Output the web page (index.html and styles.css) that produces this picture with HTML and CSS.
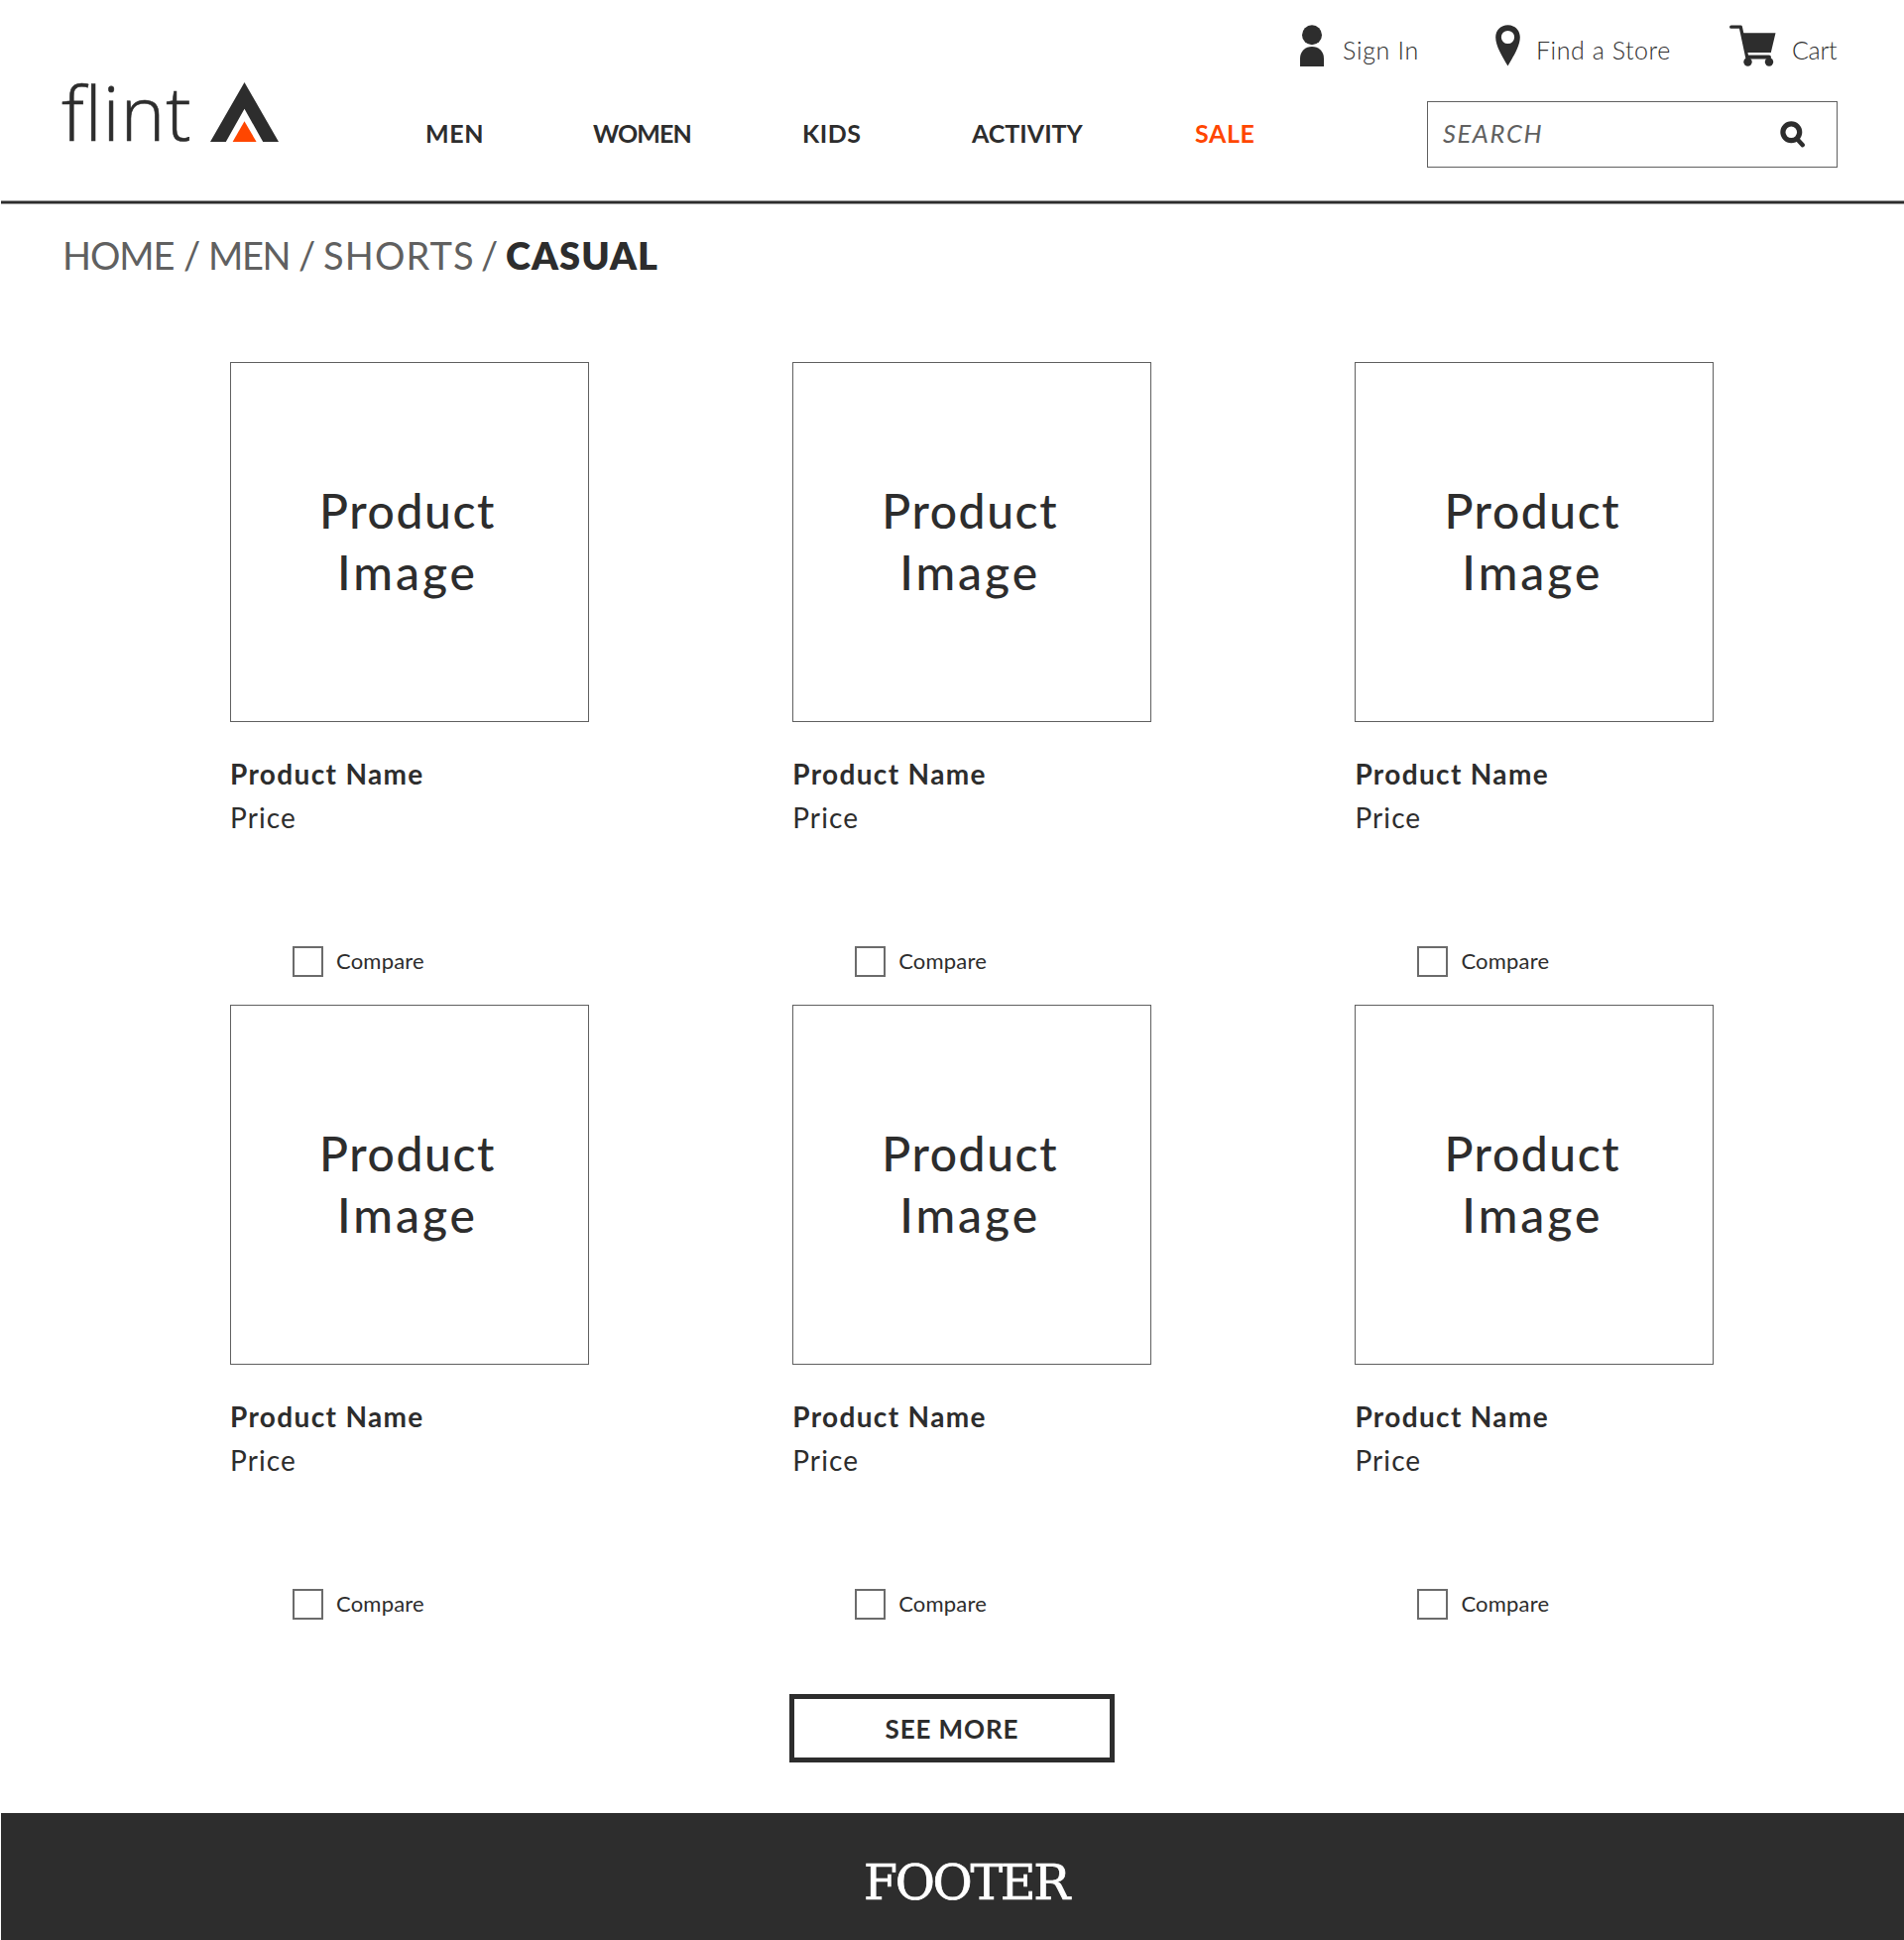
FILE: index.html
```
<!DOCTYPE html>
<html lang="en">
<head>
<meta charset="utf-8">
<title>flint – Casual Shorts</title>
<link rel="stylesheet" href="styles.css">
</head>
<body>
<header class="header">
  <a class="logo">
    <span class="logo-word">flint</span>
    <svg class="logo-mark" viewBox="0 0 69 60" width="69" height="60">
      <path fill="#2d2d2d" d="M34.5 0 69 60H53.2L34.5 26.8 15.8 60H0Z"/>
      <path fill="#ff4600" d="M34.5 39.3 46.6 60H22.6Z"/>
    </svg>
  </a>
  <nav class="nav">
    <a class="wide">MEN</a>
    <a class="tight">WOMEN</a>
    <a class="wide">KIDS</a>
    <a>ACTIVITY</a>
    <a class="wide sale">SALE</a>
  </nav>
  <div class="tools">
    <div class="account">
      <a class="account-link">
        <svg viewBox="0 0 24 42" width="24" height="42" fill="#2d2d2d"><circle cx="12" cy="10.3" r="10"/><path d="M0 42V34C0 26.500 5.400 22 12 22S24 26.500 24 34V42Z"/></svg>
        <span class="sign">Sign In</span>
      </a>
      <a class="account-link">
        <svg viewBox="0 0 25 42" width="25" height="42" fill="#2d2d2d"><path fill-rule="evenodd" d="M12.500 0.300C5.500 0.300 0.200 5.500 0.200 12.500 0.200 21.500 7 32 12.500 41.500 18 32 24.800 21.500 24.800 12.500 24.800 5.500 19.500 0.300 12.500 0.300ZM12.500 5.900A6.600 6.600 0 1 1 12.500 19.100 6.600 6.600 0 1 1 12.500 5.900Z"/></svg>
        <span class="find">Find a Store</span>
      </a>
      <a class="account-link">
        <svg viewBox="0 0 47 42" width="47" height="42"><path d="M1.700 2.200H11.300L17.700 32.300H40.300L39.600 36.500" fill="none" stroke="#2d2d2d" stroke-width="3.300" stroke-linecap="round" stroke-linejoin="round"/><path fill="#2d2d2d" d="M12.500 8.300H46.500L41.800 28H17ZM16.500 30.700H40.500V34.500H16.500Z"/><circle cx="18.500" cy="37.500" r="4.200" fill="#2d2d2d"/><circle cx="40" cy="37.500" r="4.200" fill="#2d2d2d"/></svg>
        <span class="cart">Cart</span>
      </a>
    </div>
    <div class="search">
      <span class="search-label">SEARCH</span>
      <svg viewBox="0 0 26 28" width="26" height="28" fill="none" stroke="#2d2d2d"><circle cx="11.300" cy="11.300" r="8.400" stroke-width="5.200"/><path d="M17.500 18.500 22.800 24.200" stroke-width="4.500" stroke-linecap="round"/></svg>
    </div>
  </div>
</header>
<div class="rule"></div>

<div class="breadcrumb">
  <a class="home">HOME</a><i>/</i><a class="men">MEN</a><i>/</i><a class="shorts">SHORTS</a><i>/</i><b>CASUAL</b>
</div>

<main class="grid">
  <article class="card">
    <div class="picture"><span>Product</span><span class="second">Image</span></div>
    <h2>Product Name</h2>
    <p>Price</p>
    <label class="compare"><span class="box"></span>Compare</label>
  </article>
  <article class="card">
    <div class="picture"><span>Product</span><span class="second">Image</span></div>
    <h2>Product Name</h2>
    <p>Price</p>
    <label class="compare"><span class="box"></span>Compare</label>
  </article>
  <article class="card">
    <div class="picture"><span>Product</span><span class="second">Image</span></div>
    <h2>Product Name</h2>
    <p>Price</p>
    <label class="compare"><span class="box"></span>Compare</label>
  </article>
  <article class="card">
    <div class="picture"><span>Product</span><span class="second">Image</span></div>
    <h2>Product Name</h2>
    <p>Price</p>
    <label class="compare"><span class="box"></span>Compare</label>
  </article>
  <article class="card">
    <div class="picture"><span>Product</span><span class="second">Image</span></div>
    <h2>Product Name</h2>
    <p>Price</p>
    <label class="compare"><span class="box"></span>Compare</label>
  </article>
  <article class="card">
    <div class="picture"><span>Product</span><span class="second">Image</span></div>
    <h2>Product Name</h2>
    <p>Price</p>
    <label class="compare"><span class="box"></span>Compare</label>
  </article>
</main>

<button class="more">SEE MORE</button>

<footer class="footer">FOOTER</footer>
</body>
</html>
```
FILE: styles.css
```
* { box-sizing: border-box; }
body {
  margin: 0;
  background: #fff;
  color: #2d2d2d;
  font-family: Lato, "Open Sans", sans-serif;
  display: flex;
  flex-direction: column;
}

/* Header */
.header { display: flex; align-items: flex-start; height: 202px; padding-left: 62px; }
.logo { display: flex; width: 367px; padding-top: 62px; }
.logo-word {
  width: 150px;
  font: 300 76px/102px "Open Sans", sans-serif;
  letter-spacing: 0.8px;
  -webkit-text-stroke: 0.6px #2d2d2d;
}
.logo-mark { margin-top: 21px; }

.nav {
  display: grid;
  grid-template-columns: 169px 211px 171px 225px 233px;
  padding-top: 114px;
  font-size: 25px;
  font-weight: 700;
  line-height: 40px;
}
.wide { letter-spacing: 0.6px; }
.tight { letter-spacing: -0.9px; }
.sale { color: #ff4600; }

.tools { width: 414px; padding-top: 25px; }
.account { display: flex; justify-content: flex-end; height: 77px; margin-left: -140px; }
.account-link { display: flex; font-size: 25px; font-weight: 300; line-height: 50px; }
.account-link svg { flex: none; }
.sign { width: 154px; margin-left: 19px; letter-spacing: 0.69px; }
.find { width: 195px; margin-left: 16px; letter-spacing: 0.55px; }
.cart { width: 46px; margin-left: 16px; letter-spacing: -0.28px; }

.search {
  display: flex;
  justify-content: space-between;
  height: 67px;
  padding: 19px 31px 0 15px;
  border: 1px solid #606060;
}
.search-label {
  color: #606060;
  font-size: 25.5px;
  font-style: italic;
  line-height: 24px;
  letter-spacing: 1.6px;
}
.header .tools { margin-left: 1px; }

.rule {
  height: 4px;
  margin-left: 1px;
  background: linear-gradient(#969696 1px, #2d2d2d 1px 3px, #969696 3px);
}

/* Breadcrumb */
.breadcrumb {
  display: flex;
  height: 159px;
  padding: 23px 0 0 63px;
  color: #606060;
  font-size: 38px;
  line-height: 57px;
}
.breadcrumb i { width: 25px; font-style: normal; }
.breadcrumb b { color: #2d2d2d; font-weight: 800; letter-spacing: 1.05px; }
.home { width: 122px; letter-spacing: -1.07px; }
.men { width: 91px; letter-spacing: -1.36px; }
.shorts { width: 159px; letter-spacing: 1.14px; }

/* Products */
.grid {
  display: grid;
  grid-template-columns: repeat(3, 362px);
  column-gap: 205.2px;
  row-gap: 28px;
  padding-left: 232px;
}
.card { height: 620px; }
.picture {
  display: flex;
  flex-direction: column;
  align-items: center;
  height: 363px;
  padding: 118px 4px 0 0;
  border: 1px solid #606060;
  font-size: 48px;
  font-weight: 500;
  line-height: 62px;
  letter-spacing: 1.6px;
}
.second { letter-spacing: 3px; }
.card h2, .card p { margin: 0; font-size: 28px; line-height: 44px; }
.card h2 { margin-top: 30px; font-weight: 700; letter-spacing: 1.35px; }
.card p { letter-spacing: 1.1px; }
.compare {
  display: flex;
  gap: 13px;
  margin: 108px 0 0 63px;
  font-size: 22px;
  line-height: 30px;
  letter-spacing: 0.2px;
}
.box { width: 31px; height: 31px; border: 2px solid #6b6b6b; }

.more {
  align-self: center;
  width: 328px;
  height: 69px;
  margin: 75px 0 51px;
  padding: 1px 0 0;
  background: #fff;
  border: 5px solid #2d2d2d;
  color: #2d2d2d;
  font: 700 26px/58px Lato, sans-serif;
  letter-spacing: 0.89px;
}

.footer {
  height: 128px;
  margin-left: 1px;
  padding-left: 27px;
  background: #2d2d2d;
  color: #fff;
  font: 49px/141px "DejaVu Serif", serif;
  letter-spacing: -2.3px;
  text-align: center;
  -webkit-text-stroke: 0.7px #fff;
}
```
